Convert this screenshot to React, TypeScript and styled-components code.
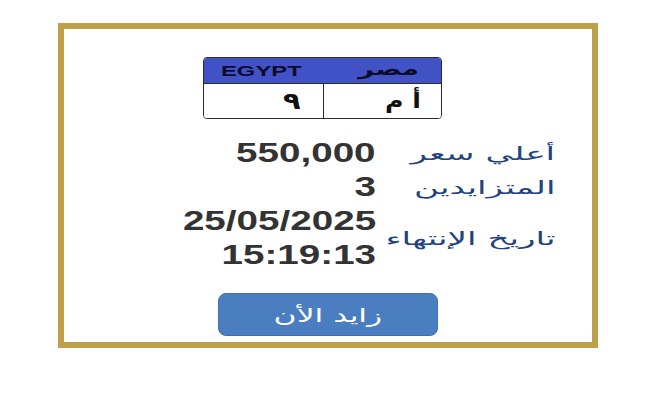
import React from 'react';
import styled, { createGlobalStyle } from 'styled-components';

const GlobalStyle = createGlobalStyle`
  html, body {
    margin: 0;
    padding: 0;
    background: #ffffff;
  }
  body {
    font-family: 'Liberation Sans', 'DejaVu Sans', sans-serif;
  }
`;

const Page = styled.div`
  width: 650px;
  height: 409px;
  padding: 23px 0 0 58px;
  box-sizing: border-box;
`;

const Frame = styled.div`
  width: 540px;
  height: 325px;
  box-sizing: border-box;
  border: 6px solid #bea04a;
  padding-top: 28px;
  display: flex;
  flex-direction: column;
`;

const PlateRow = styled.div`
  padding-left: 139px;
`;

const Plate = styled.div`
  width: 239px;
  height: 62px;
  box-sizing: border-box;
  border: 1.5px solid #2a2a2a;
  border-radius: 4px;
  overflow: hidden;
  display: flex;
  flex-direction: column;
`;

const PlateHeader = styled.div`
  height: 25px;
  background: #4152c6;
  border-bottom: 1px solid #2a2a2a;
  display: flex;
  align-items: center;
  justify-content: space-between;
  padding: 0 22px 0 17px;
`;

const Stretch = styled.span<{ $x: number; $origin?: string }>`
  display: inline-block;
  transform: scaleX(${(p) => p.$x});
  transform-origin: ${(p) => p.$origin || 'right'} center;
  white-space: nowrap;
`;

const Egypt = styled.span`
  font-family: 'Liberation Sans', sans-serif;
  font-weight: bold;
  font-size: 14px;
  color: #0c0c2a;
`;

const Misr = styled.span`
  font-family: 'DejaVu Sans', sans-serif;
  font-weight: bold;
  font-size: 17px;
  color: #0c0c2a;
  direction: rtl;
  margin-top: -3px;
`;

const PlateBody = styled.div`
  flex: 1;
  display: flex;
  background: #ffffff;
`;

const PlateCell = styled.div<{ $pad: number; $size: number; $divider?: boolean }>`
  flex: 1;
  display: flex;
  align-items: center;
  justify-content: flex-start;
  padding-right: ${(p) => p.$pad}px;
  border-right: ${(p) => (p.$divider ? '1.5px solid #2a2a2a' : 'none')};
  font-family: 'DejaVu Sans', sans-serif;
  font-weight: bold;
  font-size: ${(p) => p.$size}px;
  color: #111;
  direction: rtl;
`;

const Details = styled.div`
  direction: rtl;
  display: grid;
  grid-template-columns: 165px 200px;
  column-gap: 14px;
  justify-content: start;
  padding-right: 37px;
  margin-top: 17px;
`;

const Label = styled.div`
  font-family: 'DejaVu Sans', sans-serif;
  font-size: 18px;
  color: #22437f;
  display: flex;
  align-items: center;
  justify-content: flex-start;
`;

const Value = styled.div`
  font-family: 'Liberation Sans', sans-serif;
  font-weight: bold;
  font-size: 27px;
  line-height: 34px;
  color: #333333;
  direction: ltr;
  text-align: right;
`;

const ButtonRow = styled.div`
  padding-left: 154px;
  margin-top: 21px;
`;

const BidButton = styled.button`
  width: 220px;
  height: 43px;
  border: 1px solid #3f6fae;
  border-radius: 8px;
  background: #4a7ec0;
  color: #ffffff;
  font-family: 'DejaVu Sans', sans-serif;
  font-size: 19px;
  direction: rtl;
  cursor: pointer;
  display: flex;
  align-items: center;
  justify-content: center;
`;

type Row = { label: string; values: string[] };

const rows: Row[] = [
  { label: 'أعلي سعر', values: ['550,000'] },
  { label: 'المتزايدين', values: ['3'] },
  { label: 'تاريخ الإنتهاء', values: ['25/05/2025', '15:19:13'] },
];

const App: React.FC = () => {
  return (
    <>
      <GlobalStyle />
      <Page>
        <Frame>
          <PlateRow>
            <Plate>
              <PlateHeader>
                <Egypt>
                  <Stretch $x={1.7} $origin="left">EGYPT</Stretch>
                </Egypt>
                <Misr>
                  <Stretch $x={1.6}>مصر</Stretch>
                </Misr>
              </PlateHeader>
              <PlateBody>
                <PlateCell $pad={22} $size={24} $divider>
                  <Stretch $x={1.2}>٩</Stretch>
                </PlateCell>
                <PlateCell $pad={20} $size={21}>
                  <Stretch $x={1.2}>أ م</Stretch>
                </PlateCell>
              </PlateBody>
            </Plate>
          </PlateRow>
          <Details>
            {rows.map((row) => (
              <React.Fragment key={row.label}>
                <Label>
                  <Stretch $x={1.9}>{row.label}</Stretch>
                </Label>
                <div>
                  {row.values.map((v) => (
                    <Value key={v}>
                      <Stretch $x={1.43}>{v}</Stretch>
                    </Value>
                  ))}
                </div>
              </React.Fragment>
            ))}
          </Details>
          <ButtonRow>
            <BidButton>
              <Stretch $x={1.65} $origin="center">زايد الأن</Stretch>
            </BidButton>
          </ButtonRow>
        </Frame>
      </Page>
    </>
  );
};

export default App;
